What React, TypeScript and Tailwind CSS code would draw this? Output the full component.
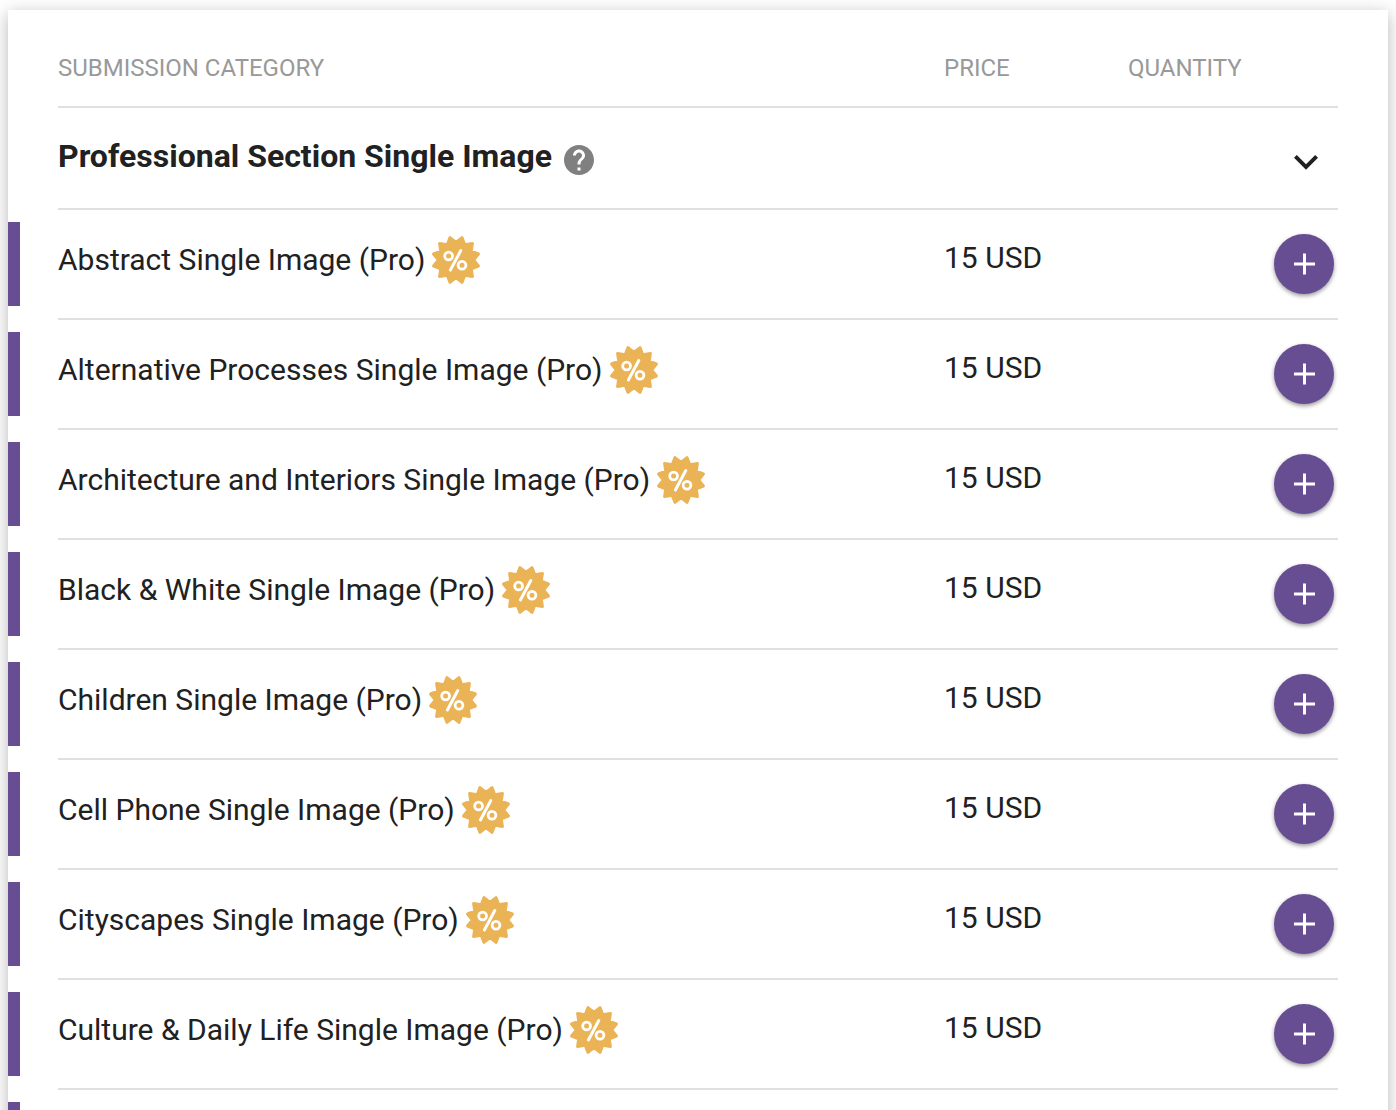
import { useState } from "react";

type Category = {
  name: string;
  price: number;
};

const CATEGORIES: Category[] = [
  { name: "Abstract Single Image (Pro)", price: 15 },
  { name: "Alternative Processes Single Image (Pro)", price: 15 },
  { name: "Architecture and Interiors Single Image (Pro)", price: 15 },
  { name: "Black & White Single Image (Pro)", price: 15 },
  { name: "Children Single Image (Pro)", price: 15 },
  { name: "Cell Phone Single Image (Pro)", price: 15 },
  { name: "Cityscapes Single Image (Pro)", price: 15 },
  { name: "Culture & Daily Life Single Image (Pro)", price: 15 },
];

// 12-pointed seal, tips at 15deg + n * 30deg
const SEAL_POINTS = Array.from({ length: 24 }, (_, i) => {
  const r = i % 2 === 0 ? 17.6 : 23.2;
  const a = (i * 15 * Math.PI) / 180;
  return `${(25 + r * Math.sin(a)).toFixed(2)},${(25 - r * Math.cos(a)).toFixed(2)}`;
}).join(" ");

function DiscountBadge() {
  return (
    <svg viewBox="0 0 50 50" className="size-[50px] shrink-0" aria-hidden="true">
      <polygon points={SEAL_POINTS} fill="#eab355" stroke="#eab355" strokeWidth="3" strokeLinejoin="round" />
      <g fill="none" stroke="#fff" strokeLinecap="round">
        <circle cx="17.6" cy="21" r="3.9" strokeWidth="2.8" />
        <circle cx="31" cy="30.2" r="3.9" strokeWidth="2.8" />
        <path d="M29.8 15.5 19.4 35" strokeWidth="3" />
      </g>
    </svg>
  );
}

function HelpIcon() {
  return (
    <svg viewBox="2 2 20 20" className="size-[30px]" fill="#808080" aria-hidden="true">
      <path d="M12 2C6.48 2 2 6.48 2 12s4.48 10 10 10 10-4.48 10-10S17.52 2 12 2zm1 17h-2v-2h2v2zm2.07-7.75-.9.92C13.45 12.9 13 13.5 13 15h-2v-.5c0-1.1.45-2.1 1.17-2.83l1.24-1.26c.37-.36.59-.86.59-1.41 0-1.1-.9-2-2-2s-2 .9-2 2H8c0-2.21 1.79-4 4-4s4 1.79 4 4c0 .88-.36 1.68-.93 2.25z" />
    </svg>
  );
}

function Marker() {
  return <div className="h-[84px] w-3 bg-[#674d92]" />;
}

function CategoryRow({ category }: { category: Category }) {
  return (
    <tr className="h-[110px]">
      <td className="border-b-2 border-transparent">
        <Marker />
      </td>
      <td className="border-b-2 border-[#e0e0e0]">
        <div className="flex items-center gap-1.5 pb-2">
          <span className="whitespace-nowrap">{category.name}</span>
          <DiscountBadge />
        </div>
      </td>
      <td className="border-b-2 border-[#e0e0e0] pb-3">{category.price} USD</td>
      <td className="border-b-2 border-[#e0e0e0]" />
      <td className="border-b-2 border-[#e0e0e0]">
        <button
          type="button"
          aria-label="Add"
          className="flex size-[60px] items-center justify-center rounded-full bg-[#674d92] shadow-[0_2px_4px_rgba(0,0,0,0.4)]"
        >
          <svg viewBox="0 0 24 24" className="size-6" stroke="#fff" strokeWidth="3" aria-hidden="true">
            <path d="M2 12h21M12.5 1.5v21" />
          </svg>
        </button>
      </td>
      <td />
    </tr>
  );
}

export default function App() {
  const [open, setOpen] = useState(true);

  return (
    <main className="h-screen overflow-hidden bg-[#fefefe] px-2 pt-2.5 font-['Roboto',sans-serif] text-[#212121]">
      <div className="min-h-screen bg-white shadow-[0_4px_16px_rgba(0,0,0,0.28)]">
        <table className="w-full table-fixed border-separate border-spacing-0 text-left text-3xl leading-9">
          <colgroup>
            <col className="w-[50px]" />
            <col />
            <col className="w-[184px]" />
            <col className="w-[146px]" />
            <col className="w-16" />
            <col className="w-[50px]" />
          </colgroup>
          <thead>
            <tr className="h-[98px] text-2xl text-[#999]">
              <td />
              <th scope="col" className="border-b-2 border-[#e0e0e0] pt-5 font-normal">SUBMISSION CATEGORY</th>
              <th scope="col" className="border-b-2 border-[#e0e0e0] pt-5 font-normal">PRICE</th>
              <th scope="col" className="border-b-2 border-[#e0e0e0] pt-5 font-normal">QUANTITY</th>
              <td className="border-b-2 border-[#e0e0e0]" />
              <td />
            </tr>
          </thead>
          <tbody>
            <tr className="h-[102px]">
              <td />
              <th scope="rowgroup" colSpan={3} className="border-b-2 border-[#e0e0e0] text-[32px] font-bold">
                <div className="flex items-center gap-3">
                  <span className="pb-1">Professional Section Single Image</span>
                  <button type="button" aria-label="Help" className="pt-1">
                    <HelpIcon />
                  </button>
                </div>
              </th>
              <td className="border-b-2 border-[#e0e0e0]">
                <button
                  type="button"
                  aria-label="Toggle section"
                  aria-expanded={open}
                  onClick={() => setOpen((v) => !v)}
                  className="flex size-16 items-center justify-center pt-2"
                >
                  <svg viewBox="0 0 24 16" className="h-4 w-6" fill="#212121" aria-hidden="true">
                    <path d="M2.8 1 12 10.2 21.2 1 24 3.8 12 15.8 0 3.8z" />
                  </svg>
                </button>
              </td>
              <td />
            </tr>
            {open && CATEGORIES.map((category) => <CategoryRow key={category.name} category={category} />)}
            <tr className="h-[110px]">
              <td className="border-b-2 border-transparent">
                <Marker />
              </td>
              <td colSpan={5} />
            </tr>
          </tbody>
        </table>
      </div>
    </main>
  );
}
